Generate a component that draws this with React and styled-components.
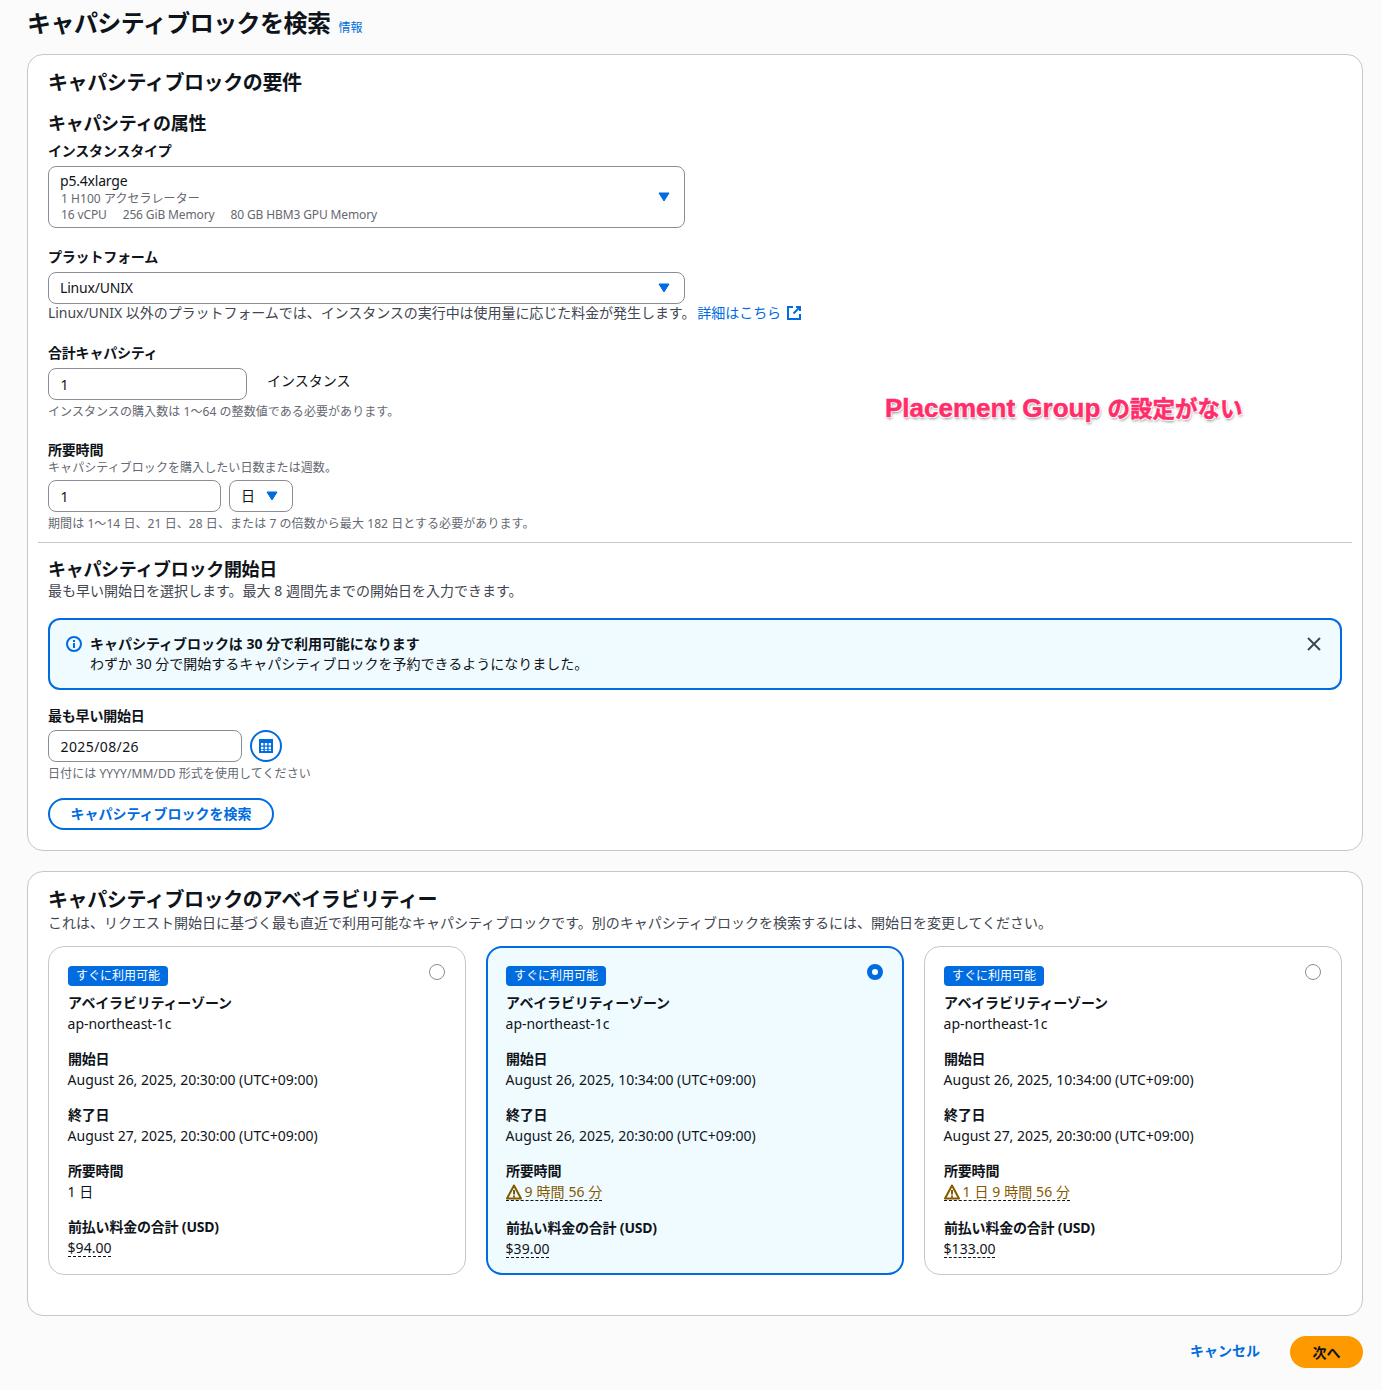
import React from "react";
import styled, { createGlobalStyle } from "styled-components";

const Global = createGlobalStyle`
  html, body { margin: 0; padding: 0; background: #fbfbfc; }
  body { font-family: "Noto Sans", "Noto Sans CJK JP", sans-serif; color: #0f141a; font-size: 14px; }
  * { box-sizing: border-box; }
`;
const Page = styled.div`
  width: 1382px; height: 1390px; padding: 0 19px 0 27px; position: relative; overflow: hidden;
`;
const TitleRow = styled.div`
  height: 54px; display: flex; align-items: flex-start; gap: 8px; padding-top: 8px;
`;
const Title = styled.h1`
  margin: 0; font-size: 24px; line-height: 30px; font-weight: 700; letter-spacing: -0.55px;
`;
const InfoLink = styled.a`
  color: #006ce0; font-size: 12px; line-height: 16px; margin-top: 12px;
`;
const Card = styled.section`
  background: #fff; border: 1px solid #c6c6cd; border-radius: 16px; padding: ${p => p.$pad};
  margin-bottom: 20px;
`;
const H2 = styled.h2`
  margin: ${p => p.$mt || 0}px 0 0; font-size: 20px; line-height: 24px; font-weight: 700; letter-spacing: -0.4px;
  position: relative; top: 1px;
`;
const H3 = styled.h3`
  margin: ${p => p.$mt || 0}px 0 0; font-size: 18px; line-height: 24px; font-weight: 700; letter-spacing: -0.3px;
  position: relative; top: 0.5px;
`;
const Label = styled.div`
  margin-top: ${p => p.$mt || 0}px; font-size: 14px; line-height: 18px; font-weight: 700; letter-spacing: -0.2px;
`;
const Help = styled.div`
  margin-top: ${p => p.$mt || 0}px; font-size: 12px; line-height: ${p => p.$lh || 18}px; color: #656871;
  padding-top: 1px; height: ${p => p.$lh || 18}px; letter-spacing: 0.07px;
`;
const Desc = styled.div`
  margin-top: ${p => p.$mt || 0}px; font-size: 14px; line-height: 18px; color: #424650;
  display: flex; align-items: center; letter-spacing: ${p => (p.$tight ? "-0.05px" : "0")}; white-space: nowrap;
`;
const SelectBox = styled.div`
  margin-top: ${p => p.$mt ?? 6}px; width: ${p => p.$w || 637}px; height: ${p => p.$h || 32}px;
  border: 1px solid #8c8c94; border-radius: 8px; background: #fff; padding: 0 14px 0 11px;
  display: flex; align-items: center; justify-content: space-between; flex: none;
`;
const SelectText = styled.div`
  display: flex; flex-direction: column;
`;
const Main = styled.span` font-size: 14px; line-height: 18px; letter-spacing: -0.2px; `;
const Sub = styled.span` font-size: 12px; line-height: 16px; color: #656871; padding: 1px 0 0 1px; height: 16px; letter-spacing: 0.05px; `;
const Specs = styled.span`
  font-size: 12px; line-height: 16px; color: #656871; display: flex; gap: 16px; padding: 1px 0 0 1px; height: 16px; letter-spacing: -0.13px;
`;
const Input = styled.div`
  width: ${p => p.$w}px; height: 32px; border: 1px solid #8c8c94; border-radius: 8px; background: #fff;
  padding: 0 11.5px; display: flex; align-items: center; font-size: 14px; flex: none; letter-spacing: 0.4px;
`;
const Row = styled.div`
  display: flex; align-items: flex-start; gap: ${p => p.$gap || 8}px; margin-top: ${p => p.$mt || 6}px;
`;
const Unit = styled.div`
  font-size: 14px; line-height: 18px; margin-top: 4px; color: #0f141a;
`;
const Divider = styled.hr`
  border: 0; height: 1px; background: #c6c6cd; margin: 10px -10px 0;
`;
const Link = styled.a`
  color: #006ce0; margin-left: 2px; display: inline-flex; align-items: center; gap: 5px;
`;
const Alert = styled.div`
  margin-top: 18px; height: 72px; border: 2px solid #006ce0; border-radius: 12px; background: #f0fbff;
  padding: 14px 18px 0 16px; display: flex; gap: 8px; position: relative;
`;
const AlertBody = styled.div`
  flex: 1; font-size: 14px; line-height: 20px;
`;
const AlertTitle = styled.div` font-weight: 700; letter-spacing: -0.03px; `;
const CalButton = styled.div`
  width: 32px; height: 32px; border: 2px solid #006ce0; border-radius: 50%; display: flex;
  align-items: center; justify-content: center; flex: none;
`;
const OutlineButton = styled.button`
  display: block; margin-top: 16px; width: 226px; height: 32px; border: 2px solid #006ce0; border-radius: 16px;
  background: #fff; color: #006ce0; font: 700 14px/18px "Noto Sans", "Noto Sans CJK JP", sans-serif; padding: 0;
`;
const Tiles = styled.div`
  display: grid; grid-template-columns: repeat(3, 418px); gap: 20px; margin-top: 14px;
`;
const Tile = styled.div`
  height: 329px; border-radius: 16px; position: relative; padding: 19px;
  border: ${p => (p.$on ? "2px solid #006ce0" : "1px solid #c6c6cd")};
  background: ${p => (p.$on ? "#f0fbff" : "#fff")};
  ${p => p.$on && "padding: 18px;"}
`;
const Badge = styled.div`
  display: inline-block; height: 20px; line-height: 19px; padding: 0 8px; background: #006ce0; color: #fff;
  border-radius: 4px; font-size: 12px; vertical-align: top;
`;
const Radio = styled.span`
  position: absolute; top: ${p => (p.$on ? 16 : 17)}px; right: ${p => (p.$on ? 19 : 20)}px;
  width: 16px; height: 16px; border-radius: 50%;
  border: ${p => (p.$on ? "5px solid #006ce0" : "1px solid #8c8c94")}; background: #fff;
`;
const Group = styled.div`
  margin-top: ${p => p.$mt}px;
`;
const GLabel = styled.div`
  font-size: 14px; line-height: 20px; font-weight: 700; letter-spacing: -0.2px;
`;
const GValue = styled.div`
  font-size: 14px; line-height: 21px; color: #0f141a; letter-spacing: -0.03px; margin-left: -0.4px;
`;
const Dashed = styled.span`
  display: inline-flex; align-items: center; gap: 3px; line-height: 17px; margin-top: 2px;
  border-bottom: 1px dashed #0f141a; color: ${p => p.$warn ? "#855900" : "#0f141a"};
  letter-spacing: ${p => p.$warn ? "0.1px" : "0"};
`;
const Footer = styled.div`
  display: flex; justify-content: flex-end; align-items: center; gap: 30px; padding-top: 0;
`;
const TextBtn = styled.a`
  color: #006ce0; font-weight: 700; font-size: 14px; line-height: 18px; position: relative; top: -1px;
`;
const Primary = styled.button`
  width: 73px; height: 32px; border: 0; border-radius: 16px; background: #ff9900; color: #0f141a;
  font: 700 14px "Noto Sans", "Noto Sans CJK JP", sans-serif; padding: 0;
`;
const Note = styled.div`
  position: absolute; left: 885px; top: 392px; color: #ff2d6b; font-size: 22.5px; line-height: 32px; font-weight: 700;
  font-family: "Liberation Sans", "Noto Sans CJK JP", sans-serif; white-space: nowrap;
  -webkit-text-stroke: 0.5px #ff2d6b;
  text-shadow: -1px -1px 0 #fff, 1px -1px 0 #fff, -1px 1px 0 #fff, 1px 1px 0 #fff, 1px 2px 3px rgba(0,0,0,.45);
`;
const NoteLatin = styled.span` font-size: 26px; `;

const Caret = () => (
  <svg width="12" height="10" viewBox="0 0 12 10"><path d="M1 1h10L6 9z" fill="#006ce0" stroke="#006ce0" strokeWidth="1" strokeLinejoin="round" /></svg>
);
const InfoIcon = () => (
  <svg width="16" height="16" viewBox="0 0 16 16" fill="none" style={{ flex: "none", marginTop: 2 }}>
    <circle cx="8" cy="8" r="7" stroke="#006ce0" strokeWidth="2" />
    <path d="M8 7v5M8 4v2" stroke="#006ce0" strokeWidth="2" />
  </svg>
);
const CloseIcon = () => (
  <svg width="16" height="16" viewBox="0 0 16 16" fill="none" style={{ flex: "none", marginTop: 2 }}>
    <path d="M2 2l12 12M14 2L2 14" stroke="#424650" strokeWidth="2" />
  </svg>
);
const ExtIcon = () => (
  <svg width="16" height="16" viewBox="0 0 16 16" fill="none">
    <path d="M7 2H2v12h12V9" stroke="#006ce0" strokeWidth="2" />
    <path d="M10 2h4v4M14 2L7.5 8.5" stroke="#006ce0" strokeWidth="2" />
  </svg>
);
const CalIcon = () => (
  <svg width="14" height="14" viewBox="0 0 14 14">
    <rect width="14" height="14" fill="#006ce0" />
    <path d="M2 4h2.4v2.4H2zM5.8 4h2.4v2.4H5.8zM9.6 4H12v2.4H9.6zM2 7.8h2.4v2.4H2zM5.8 7.8h2.4v2.4H5.8zM9.6 7.8H12v2.4H9.6z" fill="#fff" />
    <path d="M2 10.9h2.4V12H2zM5.8 10.9h2.4V12H5.8zM9.6 10.9H12V12H9.6z" fill="#fff" />
  </svg>
);
const WarnIcon = () => (
  <svg width="16" height="16" viewBox="0 0 16 16" fill="none">
    <path d="M8 1.5L1 14.5h14z" stroke="#855900" strokeWidth="2" strokeLinejoin="round" />
    <path d="M8 6v4.5M8 11.5v2" stroke="#855900" strokeWidth="2" />
  </svg>
);

const tiles = [
  { start: "August 26, 2025, 20:30:00 (UTC+09:00)", end: "August 27, 2025, 20:30:00 (UTC+09:00)", dur: "1 日", price: "$94.00" },
  { start: "August 26, 2025, 10:34:00 (UTC+09:00)", end: "August 26, 2025, 20:30:00 (UTC+09:00)", dur: "9 時間 56 分", warn: true, price: "$39.00", on: true },
  { start: "August 26, 2025, 10:34:00 (UTC+09:00)", end: "August 27, 2025, 20:30:00 (UTC+09:00)", dur: "1 日 9 時間 56 分", warn: true, price: "$133.00" },
];

export default function App() {
  return (
    <Page>
      <Global />
      <TitleRow>
        <Title>キャパシティブロックを検索</Title>
        <InfoLink>情報</InfoLink>
      </TitleRow>
      <Card $pad="15px 20px 20px">
        <H2>キャパシティブロックの要件</H2>
        <H3 $mt={16}>キャパシティの属性</H3>
        <Label $mt={8}>インスタンスタイプ</Label>
        <SelectBox $h={62}>
          <SelectText>
            <Main>p5.4xlarge</Main>
            <Sub>1 H100 アクセラレーター</Sub>
            <Specs><span>16 vCPU</span><span>256 GiB Memory</span><span>80 GB HBM3 GPU Memory</span></Specs>
          </SelectText>
          <Caret />
        </SelectBox>
        <Label $mt={20}>プラットフォーム</Label>
        <SelectBox><Main>Linux/UNIX</Main><Caret /></SelectBox>
        <Desc $tight>
          Linux/UNIX 以外のプラットフォームでは、インスタンスの実行中は使用量に応じた料金が発生します。
          <Link>詳細はこちら <ExtIcon /></Link>
        </Desc>
        <Label $mt={22}>合計キャパシティ</Label>
        <Row $gap={20}>
          <Input $w={199}>1</Input>
          <Unit>インスタンス</Unit>
        </Row>
        <Help $mt={2}>インスタンスの購入数は 1～64 の整数値である必要があります。</Help>
        <Label $mt={21}>所要時間</Label>
        <Help $lh={16}>キャパシティブロックを購入したい日数または週数。</Help>
        <Row $mt={5}>
          <Input $w={173}>1</Input>
          <SelectBox $mt={0} $w={64}><Main>日</Main><Caret /></SelectBox>
        </Row>
        <Help $mt={2}>期間は 1～14 日、21 日、28 日、または 7 の倍数から最大 182 日とする必要があります。</Help>
        <Divider />
        <H3 $mt={13}>キャパシティブロック開始日</H3>
        <Desc $mt={2}>最も早い開始日を選択します。最大 8 週間先までの開始日を入力できます。</Desc>
        <Alert>
          <InfoIcon />
          <AlertBody>
            <AlertTitle>キャパシティブロックは 30 分で利用可能になります</AlertTitle>
            わずか 30 分で開始するキャパシティブロックを予約できるようになりました。
          </AlertBody>
          <CloseIcon />
        </Alert>
        <Label $mt={17}>最も早い開始日</Label>
        <Row $mt={5}>
          <Input $w={194}>2025/08/26</Input>
          <CalButton><CalIcon /></CalButton>
        </Row>
        <Help $mt={2}>日付には YYYY/MM/DD 形式を使用してください</Help>
        <OutlineButton>キャパシティブロックを検索</OutlineButton>
      </Card>
      <Card $pad="15px 20px 40px">
        <H2>キャパシティブロックのアベイラビリティー</H2>
        <Desc $mt={3}>これは、リクエスト開始日に基づく最も直近で利用可能なキャパシティブロックです。別のキャパシティブロックを検索するには、開始日を変更してください。</Desc>
        <Tiles>
          {tiles.map((t, i) => (
            <Tile key={i} $on={t.on}>
              <Badge>すぐに利用可能</Badge>
              <Radio $on={t.on} />
              <Group $mt={7}>
                <GLabel>アベイラビリティーゾーン</GLabel>
                <GValue>ap-northeast-1c</GValue>
              </Group>
              <Group $mt={15}>
                <GLabel>開始日</GLabel>
                <GValue>{t.start}</GValue>
              </Group>
              <Group $mt={15}>
                <GLabel>終了日</GLabel>
                <GValue>{t.end}</GValue>
              </Group>
              <Group $mt={15}>
                <GLabel>所要時間</GLabel>
                {t.warn ? (
                  <GValue><Dashed $warn><WarnIcon />{t.dur}</Dashed></GValue>
                ) : (
                  <GValue>{t.dur}</GValue>
                )}
              </Group>
              <Group $mt={t.warn ? 13 : 15}>
                <GLabel>前払い料金の合計 (USD)</GLabel>
                <GValue><Dashed>{t.price}</Dashed></GValue>
              </Group>
            </Tile>
          ))}
        </Tiles>
      </Card>
      <Footer>
        <TextBtn>キャンセル</TextBtn>
        <Primary>次へ</Primary>
      </Footer>
      <Note><NoteLatin>Placement Group </NoteLatin>の設定がない</Note>
    </Page>
  );
}
